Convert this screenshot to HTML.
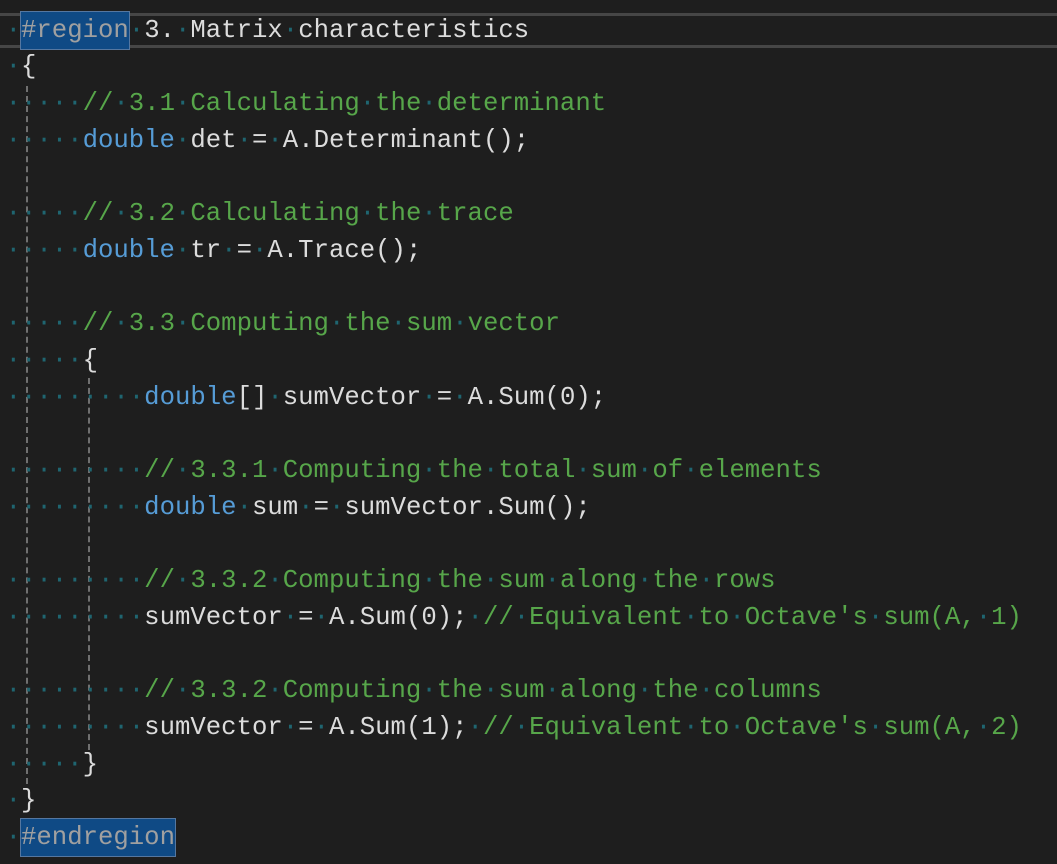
<!DOCTYPE html>
<html><head><meta charset="utf-8"><style>
html,body{margin:0;padding:0;background:#1e1e1e;width:1057px;height:864px;overflow:hidden}
.c{position:absolute;left:5.6px;top:12.6px;font-family:"Liberation Mono",monospace;font-size:25.67px;line-height:36.7px;color:#dcdcdc;white-space:pre}
i{font-style:normal;color:#1f6570}
.k{color:#569cd6}.g{color:#57a64a}
.r{color:#a0a0a0;background:#0f4a85;outline:1px solid #5577a0;padding:4px 0}
.hl{position:absolute;left:0;width:1057px;height:3px;background:#464646}
.v{position:absolute;width:0;border-left:2px dashed #707070}
</style></head><body>
<div class="hl" style="top:13px"></div>
<div class="hl" style="top:45px"></div>
<div class="v" style="left:26px;top:86px;height:698px"></div>
<div class="v" style="left:88px;top:378px;height:372px"></div>
<div class="c"><i>·</i><span class="r">#region</span><i>·</i>3.<i>·</i>Matrix<i>·</i>characteristics
<i>·</i>{
<i>·····</i><span class="g">//<i>·</i>3.1<i>·</i>Calculating<i>·</i>the<i>·</i>determinant</span>
<i>·····</i><span class="k">double</span><i>·</i>det<i>·</i>=<i>·</i>A.Determinant();

<i>·····</i><span class="g">//<i>·</i>3.2<i>·</i>Calculating<i>·</i>the<i>·</i>trace</span>
<i>·····</i><span class="k">double</span><i>·</i>tr<i>·</i>=<i>·</i>A.Trace();

<i>·····</i><span class="g">//<i>·</i>3.3<i>·</i>Computing<i>·</i>the<i>·</i>sum<i>·</i>vector</span>
<i>·····</i>{
<i>·········</i><span class="k">double</span>[]<i>·</i>sumVector<i>·</i>=<i>·</i>A.Sum(0);

<i>·········</i><span class="g">//<i>·</i>3.3.1<i>·</i>Computing<i>·</i>the<i>·</i>total<i>·</i>sum<i>·</i>of<i>·</i>elements</span>
<i>·········</i><span class="k">double</span><i>·</i>sum<i>·</i>=<i>·</i>sumVector.Sum();

<i>·········</i><span class="g">//<i>·</i>3.3.2<i>·</i>Computing<i>·</i>the<i>·</i>sum<i>·</i>along<i>·</i>the<i>·</i>rows</span>
<i>·········</i>sumVector<i>·</i>=<i>·</i>A.Sum(0);<i>·</i><span class="g">//<i>·</i>Equivalent<i>·</i>to<i>·</i>Octave's<i>·</i>sum(A,<i>·</i>1)</span>

<i>·········</i><span class="g">//<i>·</i>3.3.2<i>·</i>Computing<i>·</i>the<i>·</i>sum<i>·</i>along<i>·</i>the<i>·</i>columns</span>
<i>·········</i>sumVector<i>·</i>=<i>·</i>A.Sum(1);<i>·</i><span class="g">//<i>·</i>Equivalent<i>·</i>to<i>·</i>Octave's<i>·</i>sum(A,<i>·</i>2)</span>
<i>·····</i>}
<i>·</i>}
<i>·</i><span class="r">#endregion</span></div>
</body></html>
